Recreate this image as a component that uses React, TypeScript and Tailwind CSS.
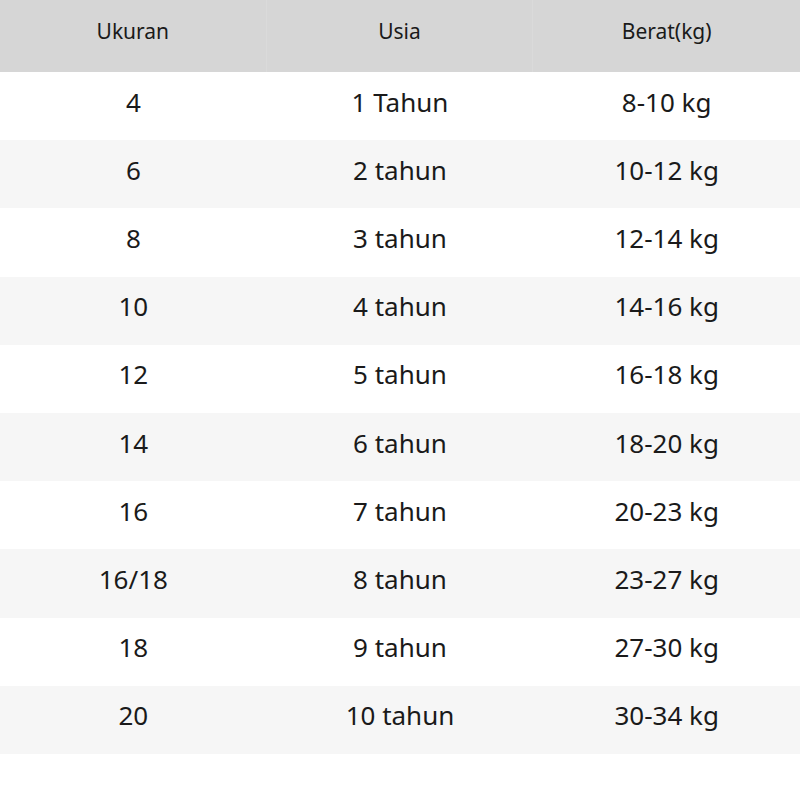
import React from 'react';

const rows: [string, string, string][] = [
  ['4', '1 Tahun', '8-10 kg'],
  ['6', '2 tahun', '10-12 kg'],
  ['8', '3 tahun', '12-14 kg'],
  ['10', '4 tahun', '14-16 kg'],
  ['12', '5 tahun', '16-18 kg'],
  ['14', '6 tahun', '18-20 kg'],
  ['16', '7 tahun', '20-23 kg'],
  ['16/18', '8 tahun', '23-27 kg'],
  ['18', '9 tahun', '27-30 kg'],
  ['20', '10 tahun', '30-34 kg'],
];

const App: React.FC = () => {
  return (
    <div className="w-[800px] h-[800px] bg-white text-[#1a1a1a] font-['Noto_Sans','Open_Sans',sans-serif]">
      <div className="grid grid-cols-3 h-[72px] bg-[#d6d6d6] text-[21px]">
        <div className="flex items-center justify-center pb-2 border-r border-[#dadada]">Ukuran</div>
        <div className="flex items-center justify-center pb-2 border-r border-[#dadada]">Usia</div>
        <div className="flex items-center justify-center pb-2">Berat(kg)</div>
      </div>
      {rows.map((r, i) => (
        <div
          key={i}
          className={`grid grid-cols-3 h-[68.2px] text-[26px] ${i % 2 === 1 ? 'bg-[#f6f6f6]' : 'bg-white'}`}
        >
          {r.map((c, j) => (
            <div key={j} className="flex items-center justify-center pb-2">
              {c}
            </div>
          ))}
        </div>
      ))}
    </div>
  );
};

export default App;
